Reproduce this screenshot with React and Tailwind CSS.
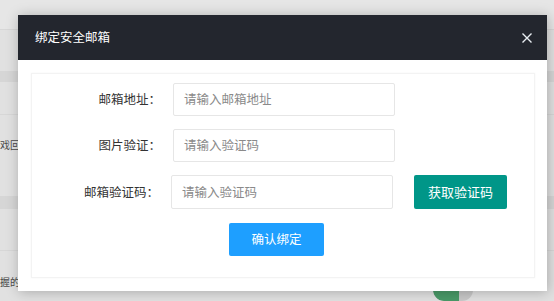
export default function App() {
  const font = { fontFamily: '"Noto Sans CJK SC", "Noto Sans", sans-serif' };
  return (
    <div className="relative w-[554px] h-[301px] overflow-hidden bg-[#e1e1e1]" style={font}>
      {/* background page (dimmed) */}
      <div className="flex w-full h-full">
        <div className="flex-1 flex flex-col">
          <div className="h-[30px] bg-[#e6e6e6] border-b border-[#d7d7d7]" />
          <div className="h-[41px]" />
          <div className="h-[11px] bg-[#d6d6d6]" />
          <div className="h-[33px] border-b border-[#d7d7d7]" />
          <div className="h-[81px] pt-[24px]">
            <span className="block text-[10px] leading-[12px] text-[#4a4a4a]">戏回</span>
          </div>
          <div className="h-[13px] bg-[#d6d6d6]" />
          <div className="h-[42px] border-b border-[#d7d7d7]" />
          <div className="h-[38px] pt-[25px]">
            <span className="block text-[10px] leading-[12px] text-[#4a4a4a]">握的</span>
          </div>
          <div className="flex-1 relative">
            <div className="absolute left-[433px] top-[-10px] w-[40px] h-[22px] rounded-full bg-[#c8c8c8] overflow-hidden">
              <div className="w-[26px] h-full bg-[#4a9a68] rounded-l-full" />
            </div>
          </div>
        </div>
      </div>

      {/* modal */}
      <div className="absolute left-[18px] top-[15px] w-[529px] h-[276px] bg-white flex flex-col shadow-[1px_1px_12px_rgba(0,0,0,0.25)]">
        <div className="h-[45px] bg-[#23262e] flex items-center justify-between pl-[17px] pr-[15px] shrink-0">
          <span className="text-[12.5px] text-white">绑定安全邮箱</span>
          <svg width="10" height="10" viewBox="0 0 10 10" className="block">
            <path d="M0.5 0.5 L9.5 9.5 M9.5 0.5 L0.5 9.5" stroke="#e8eef2" strokeWidth="1.4" fill="none" />
          </svg>
        </div>
        <div className="flex-1 p-[13px] pr-[12px]">
          <div className="h-full border border-[#f3f3f3] shadow-[0_0_2px_rgba(0,0,0,0.04)] flex flex-col pt-[9px]">
            <div className="flex items-center h-[33px]">
              <div className="w-[129px] text-right text-[12.5px] text-[#333]">邮箱地址：</div>
              <div className="ml-[12px] w-[222px] h-[33px] border border-[#e6e6e6] rounded-[2px] flex items-center pl-[10px] text-[12.5px] text-[#8a8a8a]">请输入邮箱地址</div>
            </div>
            <div className="flex items-center h-[33px] mt-[13px]">
              <div className="w-[129px] text-right text-[12.5px] text-[#333]">图片验证：</div>
              <div className="ml-[12px] w-[222px] h-[33px] border border-[#e6e6e6] rounded-[2px] flex items-center pl-[10px] text-[12.5px] text-[#8a8a8a]">请输入验证码</div>
            </div>
            <div className="flex items-center h-[34px] mt-[13px]">
              <div className="w-[127px] text-right text-[12.5px] text-[#333]">邮箱验证码：</div>
              <div className="ml-[12px] w-[222px] h-[34px] border border-[#e6e6e6] rounded-[2px] flex items-center pl-[10px] text-[12.5px] text-[#8a8a8a]">请输入验证码</div>
              <div className="ml-[21px] w-[93px] h-[34px] bg-[#009688] rounded-[2px] flex items-center justify-center text-[13px] text-white">获取验证码</div>
            </div>
            <div className="mt-[14px] ml-[197px] w-[95px] h-[33px] bg-[#1e9fff] rounded-[2px] flex items-center justify-center text-[12.5px] text-white">确认绑定</div>
          </div>
        </div>
      </div>
    </div>
  );
}
